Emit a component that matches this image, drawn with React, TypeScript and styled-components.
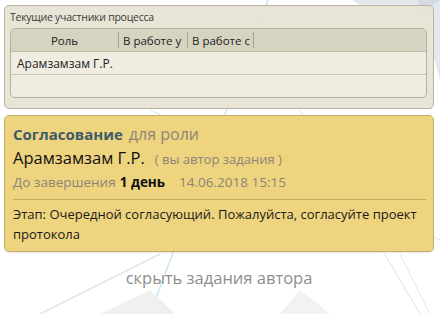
import { FC } from "react";
import styled, { createGlobalStyle } from "styled-components";

const GlobalStyle = createGlobalStyle`
  html, body {
    margin: 0;
    padding: 0;
    background: #ffffff;
  }
  body {
    font-family: "Open Sans", "Noto Sans", "DejaVu Sans", sans-serif;
  }
`;

const columns = ["Роль", "В работе у", "В работе с", ""];

const Backdrop: FC = () => (
  <SBackdrop width="440" height="314" viewBox="0 0 440 314">
    <polygon points="352,0 440,0 400,32" fill="#c9d2dc" opacity="0.5" />
    <polygon points="418,0 440,0 440,80" fill="#c3ccd8" opacity="0.45" />
    <line x1="268" y1="0" x2="150" y2="314" stroke="#bfe0ee" strokeWidth="1.5" opacity="0.8" />
    <line x1="150" y1="110" x2="440" y2="240" stroke="#cde6f0" strokeWidth="1" opacity="0.8" />
    <line x1="300" y1="110" x2="420" y2="314" stroke="#e2e2e2" strokeWidth="1" />
    <line x1="160" y1="254" x2="40" y2="314" stroke="#e6e6e6" strokeWidth="1.5" />
    <polygon points="150,290 100,314 175,314" fill="#f0f0f0" />
    <polygon points="300,290 280,314 330,314" fill="#f2f2f2" />
    <line x1="400" y1="254" x2="430" y2="314" stroke="#e8e8e8" strokeWidth="1" />
  </SBackdrop>
);

export default function App() {
  return (
    <>
      <GlobalStyle />
      <SPage>
        <Backdrop />
        <SContent>
          <SPanel>
            <SPanelTitle>Текущие участники процесса</SPanelTitle>
            <STable>
              <SHeaderRow>
                {columns.map((c, i) => (
                  <SHeaderCell key={i} $center={i === 0} $last={i === columns.length - 1}>
                    {c}
                  </SHeaderCell>
                ))}
              </SHeaderRow>
              <SRow>
                <SCell>Арамзамзам Г.Р.</SCell>
              </SRow>
              <SRow />
            </STable>
          </SPanel>

          <STask>
            <SLine>
              <STaskType>Согласование</STaskType>
              <SMuted $size={16}>для роли</SMuted>
            </SLine>
            <SLine>
              <SPerson>Арамзамзам Г.Р.</SPerson>
              <SMuted $size={13}>( вы автор задания )</SMuted>
            </SLine>
            <SLine $tight>
              <SMuted $size={13.5}>До завершения</SMuted>
              <SStrong>1 день</SStrong>
              <SMuted $size={13.5} $gap={10}>14.06.2018 15:15</SMuted>
            </SLine>
            <SDivider />
            <SStage>Этап: Очередной согласующий. Пожалуйста, согласуйте проект протокола</SStage>
          </STask>

          <SHideLink>скрыть задания автора</SHideLink>
        </SContent>
      </SPage>
    </>
  );
}

const SPage = styled.div`
  position: relative;
  width: 440px;
  height: 314px;
  overflow: hidden;
`;

const SBackdrop = styled.svg`
  position: absolute;
  left: 0;
  top: 0;
  z-index: 0;
`;

const SContent = styled.div`
  position: relative;
  z-index: 1;
  padding: 5px 6px 0 4px;
  display: flex;
  flex-direction: column;
`;

const SPanel = styled.div`
  background: rgba(232, 228, 212, 0.96);
  border: 1px solid #b8b3a2;
  border-radius: 5px;
  padding: 3px 6px 10px 5px;
`;

const SPanelTitle = styled.div`
  font-size: 10.5px;
  letter-spacing: -0.25px;
  color: #3a3a3a;
  line-height: 16px;
  margin-bottom: 3px;
`;

const STable = styled.div`
  border: 1px solid #b5b09f;
  border-radius: 5px;
  overflow: hidden;
  background: #f0ece0;
`;

const SHeaderRow = styled.div`
  display: grid;
  grid-template-columns: 108px 69px 66px 1fr;
  height: 22px;
  background: #d6d3c0;
  border-bottom: 1px solid #bdb8a7;
`;

const SHeaderCell = styled.div<{ $center?: boolean; $last?: boolean }>`
  font-size: 11.5px;
  color: #222;
  display: flex;
  align-items: center;
  justify-content: ${(p) => (p.$center ? "center" : "flex-start")};
  padding-left: ${(p) => (p.$center ? "0" : "4px")};
  border-right: ${(p) => (p.$last ? "none" : "1px solid #a9a593")};
  margin: 3px 0;
`;

const SRow = styled.div`
  height: 22px;
  display: flex;
  align-items: center;
  & + & {
    border-top: 1px solid #c9c4b3;
  }
`;

const SCell = styled.div`
  font-size: 12px;
  color: #222;
  padding-left: 6px;
`;

const STask = styled.div`
  margin-top: 6px;
  background: #efd47f;
  border: 1px solid #c6ae68;
  border-radius: 5px;
  padding: 7px 7px 7px 8px;
  box-shadow: 0 1px 1px rgba(0, 0, 0, 0.08);
`;

const SLine = styled.div<{ $tight?: boolean }>`
  display: flex;
  align-items: baseline;
  gap: ${(p) => (p.$tight ? "4px" : "6px")};
  line-height: 23px;
  white-space: nowrap;
`;

const STaskType = styled.span`
  font-size: 15px;
  font-weight: 700;
  color: #3e5a68;
`;

const SMuted = styled.span<{ $size: number; $gap?: number }>`
  font-size: ${(p) => p.$size}px;
  color: #8a8578;
  margin-left: ${(p) => p.$gap ?? 0}px;
`;

const SPerson = styled.span`
  font-size: 16.5px;
  color: #111;
  margin-right: 4px;
`;

const SStrong = styled.span`
  font-size: 13.5px;
  font-weight: 700;
  color: #111;
`;

const SDivider = styled.div`
  height: 1px;
  background: #c2aa62;
  margin: 5px 0 4px;
`;

const SStage = styled.div`
  font-size: 13px;
  line-height: 20px;
  color: #1a1a1a;
`;

const SHideLink = styled.div`
  margin-top: 14px;
  text-align: center;
  font-size: 16.5px;
  color: #8e8e8e;
`;
